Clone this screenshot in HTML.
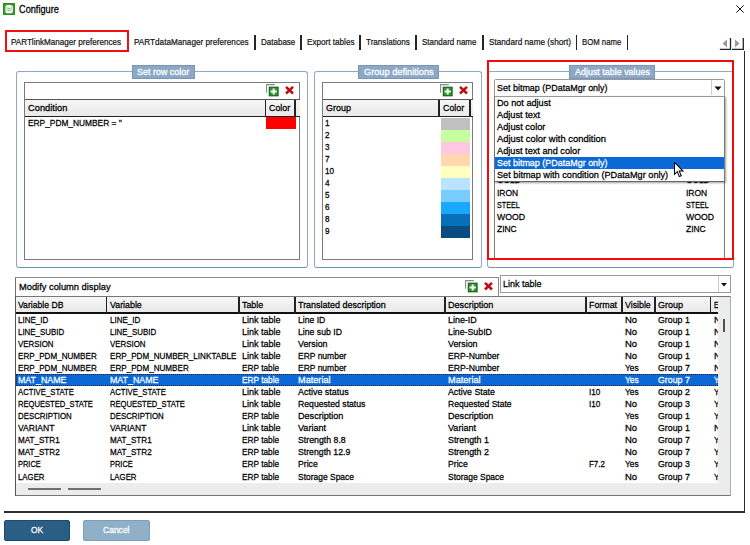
<!DOCTYPE html>
<html><head><meta charset="utf-8"><title>Configure</title>
<style>
html,body{margin:0;padding:0;background:#fff;}
body{width:750px;height:545px;position:relative;overflow:hidden;font-family:"Liberation Sans",sans-serif;font-size:11px;color:#000;}
.a{position:absolute;white-space:nowrap;}
.t{position:absolute;white-space:nowrap;-webkit-text-stroke:0.27px currentColor;line-height:12px;height:12px;font-size:9.7px;margin-top:-0.2px;transform-origin:0 50%;}
.tab{position:absolute;white-space:nowrap;-webkit-text-stroke:0.2px currentColor;top:37.5px;line-height:12px;font-size:8.8px;color:#111;}
.sep{position:absolute;top:34.6px;width:1.5px;height:15.8px;background:#262626;}
.gb{position:absolute;border:1.6px solid #8eaac4;border-bottom-color:#6f95b3;border-radius:3px;box-sizing:border-box;}
.gl{position:absolute;background:#8ca8c5;border:1px solid #7896b6;box-sizing:border-box;height:13.5px;}
.wb{position:absolute;border:1px solid #7a7a7a;box-sizing:border-box;background:#fff;}
.hd{position:absolute;background:linear-gradient(#f6f6f6,#e9e9e9);border-bottom:1px solid #222;box-sizing:border-box;}
.hs{position:absolute;width:2px;background:#222;}
.sel{position:absolute;background:#0a69d7;}
.w{color:#fff;}
</style></head><body>

<svg class="a" style="left:2.8px;top:2.8px" width="12.2" height="12.2" viewBox="0 0 12 12"><rect x="0" y="0" width="12" height="12" fill="#3f9d2c"/><rect x="0.4" y="0.4" width="11.2" height="11.2" fill="none" stroke="#2f8420" stroke-width="0.8"/><path d="M2.4 3.6c0-1.1 1.6-1.7 3.6-1.7s3.6.6 3.6 1.7v4.9c0 1.1-1.6 1.7-3.6 1.7s-3.6-.6-3.6-1.7z" fill="#fff"/><path d="M3.4 4.6c.6.5 1.5.7 2.6.7s2-.2 2.6-.7M3.4 6.6c.6.5 1.5.7 2.6.7s2-.2 2.6-.7" fill="none" stroke="#4aa636" stroke-width="0.8"/></svg>
<div class="t c" style="font-size:10.4px;left:19.1px;top:4.6px;transform-origin:0 50%;transform:scaleX(0.885);">Configure</div>
<svg class="a" style="left:735.3px;top:4px" width="10" height="10" viewBox="0 0 11 11"><path d="M1.5 1.5l8 8M9.5 1.5l-8 8" stroke="#111" stroke-width="1.1" fill="none"/></svg>
<div class="tab" style="left:11.1px;top:36.2px;transform-origin:0 50%;transform:scaleX(0.921);">PARTlinkManager preferences</div>
<div class="tab" style="left:134.0px;top:36.2px;transform-origin:0 50%;transform:scaleX(0.929);">PARTdataManager preferences</div>
<div class="tab" style="left:261.1px;top:36.2px;transform-origin:0 50%;transform:scaleX(0.911);">Database</div>
<div class="tab" style="left:307.0px;top:36.2px;transform-origin:0 50%;transform:scaleX(0.925);">Export tables</div>
<div class="tab" style="left:366.2px;top:36.2px;transform-origin:0 50%;transform:scaleX(0.920);">Translations</div>
<div class="tab" style="left:422.2px;top:36.2px;transform-origin:0 50%;transform:scaleX(0.904);">Standard name</div>
<div class="tab" style="left:488.9px;top:36.2px;transform-origin:0 50%;transform:scaleX(0.932);">Standard name (short)</div>
<div class="tab" style="left:582.3px;top:36.2px;transform-origin:0 50%;transform:scaleX(0.883);">BOM name</div>
<div class="sep" style="left:254.3px"></div>
<div class="sep" style="left:300.3px"></div>
<div class="sep" style="left:359.4px"></div>
<div class="sep" style="left:415.4px"></div>
<div class="sep" style="left:482px"></div>
<div class="sep" style="left:575.7px"></div>
<div class="sep" style="left:626.5px"></div>
<div class="a" style="left:4.7px;top:29.9px;width:120.5px;height:18.6px;border:2px solid #f01010;"></div>
<svg class="a" style="left:718.7px;top:37px" width="26" height="14" viewBox="0 0 26 14"><path d="M0.8 12.3H11.5V1" fill="none" stroke="#222" stroke-width="1.3"/><path d="M13 12.3H24.3V1" fill="none" stroke="#222" stroke-width="1.3"/><path d="M8 2.5v8l-4.5-4z" fill="#999"/><path d="M16 2.5v8l4.5-4z" fill="#999"/></svg>
<div class="a" style="left:743.5px;top:51px;width:1.7px;height:461px;background:#2a2a2a;"></div>
<div class="a" style="left:4px;top:510.9px;width:741px;height:1.8px;background:#303030;"></div>
<div class="gb" style="left:16.3px;top:70.8px;width:292px;height:197.2px;"></div>
<div class="gl" style="left:132px;top:65px;width:63px;"></div>
<div class="t w" style="left:137.3px;top:66px;transform:scaleX(0.924);">Set row color</div>
<div class="gb" style="left:313.6px;top:70.8px;width:168.6px;height:197.2px;"></div>
<div class="gl" style="left:358px;top:65px;width:81px;"></div>
<div class="t w" style="left:363.6px;top:66px;transform:scaleX(0.951);">Group definitions</div>
<div class="gb" style="left:487.3px;top:70.8px;width:247px;height:197.2px;"></div>
<div class="gl" style="left:569px;top:65px;width:86px;"></div>
<div class="t w" style="left:574.5px;top:66px;transform:scaleX(0.922);">Adjust table values</div>
<div class="wb" style="left:24px;top:81.5px;width:275.5px;height:178px;"></div>
<svg class="a" style="left:266px;top:84px" width="30" height="13" viewBox="0 0 30 13"><path d="M0.6 8.8V0.6H8.8" fill="none" stroke="#8a8a8a" stroke-width="1.1"/><rect x="3.3" y="3.2" width="8.8" height="8.6" fill="#2a9430" stroke="#14601a" stroke-width="1.1"/><path d="M7.7 4.4v6.2M4.6 7.5h6.2" stroke="#fff" stroke-width="2"/><path d="M20 2.9l7 6.6M27 2.9l-7 6.6" stroke="#c00c0c" stroke-width="2.5"/></svg>
<div class="hd" style="left:25px;top:99px;width:275px;height:18px;border-top:1px solid #555;"></div>
<div class="hs" style="left:264.5px;top:100px;height:16px;width:1.2px"></div><div class="hs" style="left:294px;top:100px;height:16px;"></div>
<div class="t" style="left:28px;top:102px;transform:scaleX(0.962);">Condition</div><div class="t" style="left:269px;top:102px;transform:scaleX(0.916);">Color</div>
<div class="t" style="left:28px;top:116.8px;transform:scaleX(0.862);">ERP_PDM_NUMBER = ''</div>
<div class="a" style="left:266px;top:117px;width:30px;height:12px;background:#ff0000;"></div>
<div class="wb" style="left:322px;top:81.5px;width:151.3px;height:178px;"></div>
<svg class="a" style="left:440px;top:84px" width="30" height="13" viewBox="0 0 30 13"><path d="M0.6 8.8V0.6H8.8" fill="none" stroke="#8a8a8a" stroke-width="1.1"/><rect x="3.3" y="3.2" width="8.8" height="8.6" fill="#2a9430" stroke="#14601a" stroke-width="1.1"/><path d="M7.7 4.4v6.2M4.6 7.5h6.2" stroke="#fff" stroke-width="2"/><path d="M20 2.9l7 6.6M27 2.9l-7 6.6" stroke="#c00c0c" stroke-width="2.5"/></svg>
<div class="hd" style="left:323px;top:99px;width:150px;height:18px;border-top:1px solid #555;"></div>
<div class="hs" style="left:438px;top:100px;height:16px;"></div><div class="hs" style="left:469px;top:100px;height:16px;"></div>
<div class="t" style="left:325.5px;top:102px;transform:scaleX(0.928);">Group</div><div class="t" style="left:443px;top:102px;transform:scaleX(0.916);">Color</div>
<div class="t" style="left:325px;top:117.5px;transform:scaleX(0.843);">1</div><div class="a" style="left:440.5px;top:117.5px;width:29px;height:12px;background:#c0c0c0;"></div>
<div class="t" style="left:325px;top:129.5px;transform:scaleX(0.843);">2</div><div class="a" style="left:440.5px;top:129.5px;width:29px;height:12px;background:#c8ffa0;"></div>
<div class="t" style="left:325px;top:141.5px;transform:scaleX(0.843);">3</div><div class="a" style="left:440.5px;top:141.5px;width:29px;height:12px;background:#ffc8e0;"></div>
<div class="t" style="left:325px;top:153.5px;transform:scaleX(0.843);">7</div><div class="a" style="left:440.5px;top:153.5px;width:29px;height:12px;background:#ffd8b0;"></div>
<div class="t" style="left:325px;top:165.5px;transform:scaleX(0.843);">10</div><div class="a" style="left:440.5px;top:165.5px;width:29px;height:12px;background:#ffffc0;"></div>
<div class="t" style="left:325px;top:177.5px;transform:scaleX(0.843);">4</div><div class="a" style="left:440.5px;top:177.5px;width:29px;height:12px;background:#b8e4ff;"></div>
<div class="t" style="left:325px;top:189.5px;transform:scaleX(0.843);">5</div><div class="a" style="left:440.5px;top:189.5px;width:29px;height:12px;background:#78ccff;"></div>
<div class="t" style="left:325px;top:201.5px;transform:scaleX(0.843);">6</div><div class="a" style="left:440.5px;top:201.5px;width:29px;height:12px;background:#18a8ff;"></div>
<div class="t" style="left:325px;top:213.5px;transform:scaleX(0.843);">8</div><div class="a" style="left:440.5px;top:213.5px;width:29px;height:12px;background:#0870b8;"></div>
<div class="t" style="left:325px;top:225.5px;transform:scaleX(0.843);">9</div><div class="a" style="left:440.5px;top:225.5px;width:29px;height:12px;background:#084c80;"></div>
<div class="wb" style="left:494px;top:96px;width:231px;height:163.5px;"></div>
<div class="t" style="left:497px;top:186.7px;transform:scaleX(0.875);">IRON</div><div class="t" style="left:686px;top:186.7px;transform:scaleX(0.875);">IRON</div>
<div class="t" style="left:497px;top:198.75px;transform:scaleX(0.740);">STEEL</div><div class="t" style="left:686px;top:198.75px;transform:scaleX(0.740);">STEEL</div>
<div class="t" style="left:497px;top:210.79999999999998px;transform:scaleX(0.897);">WOOD</div><div class="t" style="left:686px;top:210.79999999999998px;transform:scaleX(0.897);">WOOD</div>
<div class="t" style="left:497px;top:222.85px;transform:scaleX(0.871);">ZINC</div><div class="t" style="left:686px;top:222.85px;transform:scaleX(0.871);">ZINC</div>
<div class="a" style="left:497px;top:182px;width:30px;height:3.2px;overflow:hidden;"><div class="t" style="left:0;top:-7.4px;transform:scaleX(0.855);">GOLD</div></div>
<div class="a" style="left:686px;top:182px;width:30px;height:3.2px;overflow:hidden;"><div class="t" style="left:0;top:-7.4px;transform:scaleX(0.855);">GOLD</div></div>
<div class="wb" style="left:494px;top:79px;width:230.5px;height:17.5px;border-color:#9a9a9a;border-radius:1.5px;"></div>
<div class="a" style="left:711px;top:80px;width:1px;height:15px;background:#ccc;"></div>
<svg class="a" style="left:714px;top:86px" width="8" height="5" viewBox="0 0 8 5"><path d="M0.5 0.5h7l-3.5 4z" fill="#111"/></svg>
<div class="t" style="left:497px;top:82px;transform:scaleX(0.925);">Set bitmap (PDataMgr only)</div>
<div class="wb" style="left:494px;top:95.5px;width:230.5px;height:86.5px;border-color:#999 #777 #666 #777;box-shadow:1.2px 1.2px 2px rgba(0,0,0,.38);"></div>
<div class="sel" style="left:495px;top:157px;width:229px;height:12px;"></div>
<div class="t" style="left:497px;top:97.0px;transform:scaleX(0.942);">Do not adjust</div>
<div class="t" style="left:497px;top:109.1px;transform:scaleX(0.954);">Adjust text</div>
<div class="t" style="left:497px;top:121.2px;transform:scaleX(0.957);">Adjust color</div>
<div class="t" style="left:497px;top:133.3px;transform:scaleX(0.973);">Adjust color with condition</div>
<div class="t" style="left:497px;top:145.4px;transform:scaleX(0.949);">Adjust text and color</div>
<div class="t w" style="left:497px;top:157.5px;transform:scaleX(0.925);">Set bitmap (PDataMgr only)</div>
<div class="t" style="left:497px;top:169.6px;transform:scaleX(0.946);">Set bitmap with condition (PDataMgr only)</div>
<div class="a" style="left:487.3px;top:60px;width:242.5px;height:195.8px;border:2.2px solid #f80808;"></div>
<svg class="a" style="left:674px;top:162px" width="10.6" height="15.8" viewBox="0 0 12 18"><path d="M0.5 0.5v13.5l3.2-3 2.3 5.6 2.2-.9-2.3-5.4h4.4z" fill="#fff" stroke="#000" stroke-width="1.15"/></svg>
<div class="wb" style="left:15px;top:277.2px;width:483.5px;height:30px;border-color:#8c8c8c;border-left-color:#707070;"></div>
<div class="wb" style="left:15px;top:296px;width:715.5px;height:199.8px;border-color:#777;border-right-color:#a8b0c8;border-left-color:#555;"></div>
<div class="t" style="left:18.6px;top:281px;transform:scaleX(0.961);">Modify column display</div>
<svg class="a" style="left:465px;top:280.3px" width="30" height="13" viewBox="0 0 30 13"><path d="M0.6 8.8V0.6H8.8" fill="none" stroke="#8a8a8a" stroke-width="1.1"/><rect x="3.3" y="3.2" width="8.8" height="8.6" fill="#2a9430" stroke="#14601a" stroke-width="1.1"/><path d="M7.7 4.4v6.2M4.6 7.5h6.2" stroke="#fff" stroke-width="2"/><path d="M20 2.9l7 6.6M27 2.9l-7 6.6" stroke="#c00c0c" stroke-width="2.5"/></svg>
<div class="wb" style="left:499.5px;top:275px;width:231px;height:18px;border-color:#9a9a9a;"></div>
<div class="a" style="left:717.5px;top:276px;width:1px;height:16px;background:#c8c8c8;"></div>
<div class="t" style="left:503px;top:278px;transform:scaleX(0.931);">Link table</div>
<svg class="a" style="left:721px;top:283px" width="6" height="4" viewBox="0 0 6 4"><path d="M0 0h6l-3 3.6z" fill="#111"/></svg>
<div class="hd" style="left:16px;top:297px;width:701.5px;height:17px;border-bottom:2px solid #111;"></div>
<div class="hs" style="left:105.8px;top:297px;height:15.5px;width:1.6px;"></div>
<div class="hs" style="left:238.2px;top:297px;height:15.5px;width:1.6px;"></div>
<div class="hs" style="left:294px;top:297px;height:15.5px;width:1.6px;"></div>
<div class="hs" style="left:444px;top:297px;height:15.5px;width:1.6px;"></div>
<div class="hs" style="left:585px;top:297px;height:15.5px;width:1.6px;"></div>
<div class="hs" style="left:621.2px;top:297px;height:15.5px;width:1.6px;"></div>
<div class="hs" style="left:654.2px;top:297px;height:15.5px;width:1.6px;"></div>
<div class="hs" style="left:709.9px;top:297px;height:15.5px;width:1.6px;"></div>
<div class="a" style="left:16px;top:297px;width:701.5px;height:186px;overflow:hidden;">
<div class="t" style="left:2.3000000000000007px;top:2.3px;transform:scaleX(0.891);">Variable DB</div>
<div class="t" style="left:94px;top:2.3px;transform:scaleX(0.913);">Variable</div>
<div class="t" style="left:226px;top:2.3px;transform:scaleX(0.915);">Table</div>
<div class="t" style="left:282px;top:2.3px;transform:scaleX(0.925);">Translated description</div>
<div class="t" style="left:432.3px;top:2.3px;transform:scaleX(0.937);">Description</div>
<div class="t" style="left:573px;top:2.3px;transform:scaleX(0.913);">Format</div>
<div class="t" style="left:609px;top:2.3px;transform:scaleX(0.907);">Visible</div>
<div class="t" style="left:642px;top:2.3px;transform:scaleX(0.928);">Group</div>
<div class="t" style="left:697.7px;top:2.3px;transform:scaleX(0.703);">E</div>
<div class="sel" style="left:0px;top:77px;width:701.5px;height:12px;outline:1px dotted #223;outline-offset:-1px;"></div>
<div class="t" style="left:2.3000000000000007px;top:17.0px;transform:scaleX(0.827);">LINE_ID</div>
<div class="t" style="left:94px;top:17.0px;transform:scaleX(0.827);">LINE_ID</div>
<div class="t" style="left:226px;top:17.0px;transform:scaleX(0.931);">Link table</div>
<div class="t" style="left:282px;top:17.0px;transform:scaleX(0.888);">Line ID</div>
<div class="t" style="left:432.3px;top:17.0px;transform:scaleX(0.921);">Line-ID</div>
<div class="t" style="left:609px;top:17.0px;transform:scaleX(0.978);">No</div>
<div class="t" style="left:642px;top:17.0px;transform:scaleX(0.908);">Group 1</div>
<div class="t" style="left:697.7px;top:17.0px;transform:scaleX(0.974);">N</div>
<div class="t" style="left:2.3000000000000007px;top:29.1px;transform:scaleX(0.817);">LINE_SUBID</div>
<div class="t" style="left:94px;top:29.1px;transform:scaleX(0.817);">LINE_SUBID</div>
<div class="t" style="left:226px;top:29.1px;transform:scaleX(0.931);">Link table</div>
<div class="t" style="left:282px;top:29.1px;transform:scaleX(0.896);">Line sub ID</div>
<div class="t" style="left:432.3px;top:29.1px;transform:scaleX(0.906);">Line-SubID</div>
<div class="t" style="left:609px;top:29.1px;transform:scaleX(0.978);">No</div>
<div class="t" style="left:642px;top:29.1px;transform:scaleX(0.908);">Group 1</div>
<div class="t" style="left:697.7px;top:29.1px;transform:scaleX(0.974);">N</div>
<div class="t" style="left:2.3000000000000007px;top:41.1px;transform:scaleX(0.816);">VERSION</div>
<div class="t" style="left:94px;top:41.1px;transform:scaleX(0.816);">VERSION</div>
<div class="t" style="left:226px;top:41.1px;transform:scaleX(0.931);">Link table</div>
<div class="t" style="left:282px;top:41.1px;transform:scaleX(0.914);">Version</div>
<div class="t" style="left:432.3px;top:41.1px;transform:scaleX(0.914);">Version</div>
<div class="t" style="left:609px;top:41.1px;transform:scaleX(0.978);">No</div>
<div class="t" style="left:642px;top:41.1px;transform:scaleX(0.908);">Group 1</div>
<div class="t" style="left:697.7px;top:41.1px;transform:scaleX(0.974);">N</div>
<div class="t" style="left:2.3000000000000007px;top:53.2px;transform:scaleX(0.836);">ERP_PDM_NUMBER</div>
<div class="t" style="left:94px;top:53.2px;transform:scaleX(0.837);">ERP_PDM_NUMBER_LINKTABLE</div>
<div class="t" style="left:226px;top:53.2px;transform:scaleX(0.931);">Link table</div>
<div class="t" style="left:282px;top:53.2px;transform:scaleX(0.876);">ERP number</div>
<div class="t" style="left:432.3px;top:53.2px;transform:scaleX(0.894);">ERP-Number</div>
<div class="t" style="left:609px;top:53.2px;transform:scaleX(0.978);">No</div>
<div class="t" style="left:642px;top:53.2px;transform:scaleX(0.908);">Group 1</div>
<div class="t" style="left:697.7px;top:53.2px;transform:scaleX(0.974);">N</div>
<div class="t" style="left:2.3000000000000007px;top:65.2px;transform:scaleX(0.836);">ERP_PDM_NUMBER</div>
<div class="t" style="left:94px;top:65.2px;transform:scaleX(0.836);">ERP_PDM_NUMBER</div>
<div class="t" style="left:226px;top:65.2px;transform:scaleX(0.854);">ERP table</div>
<div class="t" style="left:282px;top:65.2px;transform:scaleX(0.876);">ERP number</div>
<div class="t" style="left:432.3px;top:65.2px;transform:scaleX(0.894);">ERP-Number</div>
<div class="t" style="left:609px;top:65.2px;transform:scaleX(0.862);">Yes</div>
<div class="t" style="left:642px;top:65.2px;transform:scaleX(0.908);">Group 7</div>
<div class="t" style="left:697.7px;top:65.2px;transform:scaleX(0.974);">N</div>
<div class="t w" style="left:2.3000000000000007px;top:77.2px;transform:scaleX(0.912);">MAT_NAME</div>
<div class="t w" style="left:94px;top:77.2px;transform:scaleX(0.912);">MAT_NAME</div>
<div class="t w" style="left:226px;top:77.2px;transform:scaleX(0.854);">ERP table</div>
<div class="t w" style="left:282px;top:77.2px;transform:scaleX(0.945);">Material</div>
<div class="t w" style="left:432.3px;top:77.2px;transform:scaleX(0.945);">Material</div>
<div class="t w" style="left:609px;top:77.2px;transform:scaleX(0.862);">Yes</div>
<div class="t w" style="left:642px;top:77.2px;transform:scaleX(0.908);">Group 7</div>
<div class="t w" style="left:697.7px;top:77.2px;transform:scaleX(0.820);">Y</div>
<div class="t" style="left:2.3000000000000007px;top:89.3px;transform:scaleX(0.798);">ACTIVE_STATE</div>
<div class="t" style="left:94px;top:89.3px;transform:scaleX(0.798);">ACTIVE_STATE</div>
<div class="t" style="left:226px;top:89.3px;transform:scaleX(0.931);">Link table</div>
<div class="t" style="left:282px;top:89.3px;transform:scaleX(0.924);">Active status</div>
<div class="t" style="left:432.3px;top:89.3px;transform:scaleX(0.908);">Active State</div>
<div class="t" style="left:573px;top:89.3px;transform:scaleX(0.843);">I10</div>
<div class="t" style="left:609px;top:89.3px;transform:scaleX(0.862);">Yes</div>
<div class="t" style="left:642px;top:89.3px;transform:scaleX(0.908);">Group 2</div>
<div class="t" style="left:697.7px;top:89.3px;transform:scaleX(0.820);">Y</div>
<div class="t" style="left:2.3000000000000007px;top:101.4px;transform:scaleX(0.785);">REQUESTED_STATE</div>
<div class="t" style="left:94px;top:101.4px;transform:scaleX(0.785);">REQUESTED_STATE</div>
<div class="t" style="left:226px;top:101.4px;transform:scaleX(0.931);">Link table</div>
<div class="t" style="left:282px;top:101.4px;transform:scaleX(0.894);">Requested status</div>
<div class="t" style="left:432.3px;top:101.4px;transform:scaleX(0.881);">Requested State</div>
<div class="t" style="left:573px;top:101.4px;transform:scaleX(0.843);">I10</div>
<div class="t" style="left:609px;top:101.4px;transform:scaleX(0.978);">No</div>
<div class="t" style="left:642px;top:101.4px;transform:scaleX(0.908);">Group 3</div>
<div class="t" style="left:697.7px;top:101.4px;transform:scaleX(0.820);">Y</div>
<div class="t" style="left:2.3000000000000007px;top:113.4px;transform:scaleX(0.812);">DESCRIPTION</div>
<div class="t" style="left:94px;top:113.4px;transform:scaleX(0.812);">DESCRIPTION</div>
<div class="t" style="left:226px;top:113.4px;transform:scaleX(0.854);">ERP table</div>
<div class="t" style="left:282px;top:113.4px;transform:scaleX(0.937);">Description</div>
<div class="t" style="left:432.3px;top:113.4px;transform:scaleX(0.937);">Description</div>
<div class="t" style="left:609px;top:113.4px;transform:scaleX(0.862);">Yes</div>
<div class="t" style="left:642px;top:113.4px;transform:scaleX(0.908);">Group 1</div>
<div class="t" style="left:697.7px;top:113.4px;transform:scaleX(0.820);">Y</div>
<div class="t" style="left:2.3000000000000007px;top:125.5px;transform:scaleX(0.881);">VARIANT</div>
<div class="t" style="left:94px;top:125.5px;transform:scaleX(0.881);">VARIANT</div>
<div class="t" style="left:226px;top:125.5px;transform:scaleX(0.931);">Link table</div>
<div class="t" style="left:282px;top:125.5px;transform:scaleX(0.934);">Variant</div>
<div class="t" style="left:432.3px;top:125.5px;transform:scaleX(0.934);">Variant</div>
<div class="t" style="left:609px;top:125.5px;transform:scaleX(0.978);">No</div>
<div class="t" style="left:642px;top:125.5px;transform:scaleX(0.908);">Group 1</div>
<div class="t" style="left:697.7px;top:125.5px;transform:scaleX(0.974);">N</div>
<div class="t" style="left:2.3000000000000007px;top:137.5px;transform:scaleX(0.835);">MAT_STR1</div>
<div class="t" style="left:94px;top:137.5px;transform:scaleX(0.835);">MAT_STR1</div>
<div class="t" style="left:226px;top:137.5px;transform:scaleX(0.854);">ERP table</div>
<div class="t" style="left:282px;top:137.5px;transform:scaleX(0.904);">Strength 8.8</div>
<div class="t" style="left:432.3px;top:137.5px;transform:scaleX(0.914);">Strength 1</div>
<div class="t" style="left:609px;top:137.5px;transform:scaleX(0.978);">No</div>
<div class="t" style="left:642px;top:137.5px;transform:scaleX(0.908);">Group 7</div>
<div class="t" style="left:697.7px;top:137.5px;transform:scaleX(0.820);">Y</div>
<div class="t" style="left:2.3000000000000007px;top:149.6px;transform:scaleX(0.835);">MAT_STR2</div>
<div class="t" style="left:94px;top:149.6px;transform:scaleX(0.835);">MAT_STR2</div>
<div class="t" style="left:226px;top:149.6px;transform:scaleX(0.854);">ERP table</div>
<div class="t" style="left:282px;top:149.6px;transform:scaleX(0.898);">Strength 12.9</div>
<div class="t" style="left:432.3px;top:149.6px;transform:scaleX(0.914);">Strength 2</div>
<div class="t" style="left:609px;top:149.6px;transform:scaleX(0.978);">No</div>
<div class="t" style="left:642px;top:149.6px;transform:scaleX(0.908);">Group 7</div>
<div class="t" style="left:697.7px;top:149.6px;transform:scaleX(0.820);">Y</div>
<div class="t" style="left:2.3000000000000007px;top:161.6px;transform:scaleX(0.767);">PRICE</div>
<div class="t" style="left:94px;top:161.6px;transform:scaleX(0.767);">PRICE</div>
<div class="t" style="left:226px;top:161.6px;transform:scaleX(0.854);">ERP table</div>
<div class="t" style="left:282px;top:161.6px;transform:scaleX(0.892);">Price</div>
<div class="t" style="left:432.3px;top:161.6px;transform:scaleX(0.892);">Price</div>
<div class="t" style="left:573px;top:161.6px;transform:scaleX(0.820);">F7.2</div>
<div class="t" style="left:609px;top:161.6px;transform:scaleX(0.862);">Yes</div>
<div class="t" style="left:642px;top:161.6px;transform:scaleX(0.908);">Group 3</div>
<div class="t" style="left:697.7px;top:161.6px;transform:scaleX(0.820);">Y</div>
<div class="t" style="left:2.3000000000000007px;top:173.7px;transform:scaleX(0.807);">LAGER</div>
<div class="t" style="left:94px;top:173.7px;transform:scaleX(0.807);">LAGER</div>
<div class="t" style="left:226px;top:173.7px;transform:scaleX(0.854);">ERP table</div>
<div class="t" style="left:282px;top:173.7px;transform:scaleX(0.874);">Storage Space</div>
<div class="t" style="left:432.3px;top:173.7px;transform:scaleX(0.874);">Storage Space</div>
<div class="t" style="left:609px;top:173.7px;transform:scaleX(0.978);">No</div>
<div class="t" style="left:642px;top:173.7px;transform:scaleX(0.908);">Group 7</div>
<div class="t" style="left:697.7px;top:173.7px;transform:scaleX(0.820);">Y</div>
</div>
<div class="a" style="left:717.5px;top:297px;width:12px;height:198px;background:#ececec;"></div>
<div class="a" style="left:722.7px;top:318.5px;width:2px;height:13.3px;background:#505050;"></div>
<div class="a" style="left:16px;top:482.5px;width:713.5px;height:12.5px;background:#ececec;"></div>
<div class="a" style="left:28px;top:488px;width:33px;height:1.8px;background:#707070;"></div>
<div class="a" style="left:68px;top:488px;width:33px;height:1.8px;background:#707070;"></div>
<div class="a" style="left:4px;top:520px;width:66px;height:20.7px;background:#2a5e84;border:1px solid #1b4a70;border-radius:2px;box-sizing:border-box;"></div>
<div class="t w" style="left:31.2px;top:524.5px;transform:scaleX(0.865);">OK</div>
<div class="a" style="left:83px;top:520px;width:66.5px;height:20.7px;background:#90b0c8;border:1px solid #7c9fba;border-radius:2px;box-sizing:border-box;"></div>
<div class="t w" style="left:103.2px;top:524.5px;transform:scaleX(0.879);">Cancel</div>
</body></html>
